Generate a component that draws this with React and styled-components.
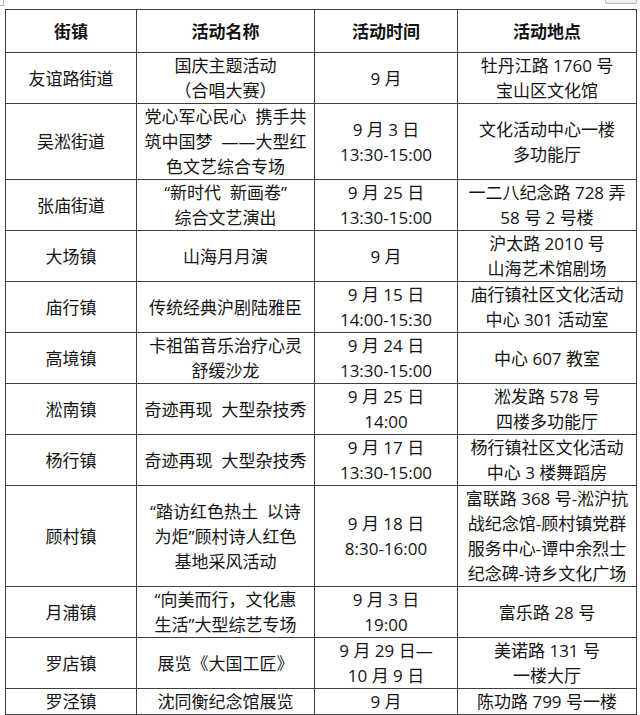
import React from "react";
import styled, { createGlobalStyle } from "styled-components";

const rows = [
  {
    h: 51,
    cells: [["友谊路街道"], ["国庆主题活动", "（合唱大赛）"], ["9 月"], ["牡丹江路 1760 号", "宝山区文化馆"]],
  },
  {
    h: 76,
    cells: [
      ["吴淞街道"],
      ["党心军心民心  携手共", "筑中国梦  ——大型红", "色文艺综合专场"],
      ["9 月 3 日", "13:30-15:00"],
      ["文化活动中心一楼", "多功能厅"],
    ],
  },
  {
    h: 50,
    cells: [
      ["张庙街道"],
      ["“新时代  新画卷”", "综合文艺演出"],
      ["9 月 25 日", "13:30-15:00"],
      ["一二八纪念路 728 弄", "58 号 2 号楼"],
    ],
  },
  {
    h: 51,
    cells: [["大场镇"], ["山海月月演"], ["9 月"], ["沪太路 2010 号", "山海艺术馆剧场"]],
  },
  {
    h: 50,
    cells: [
      ["庙行镇"],
      ["传统经典沪剧陆雅臣"],
      ["9 月 15 日", "14:00-15:30"],
      ["庙行镇社区文化活动", "中心 301 活动室"],
    ],
  },
  {
    h: 51,
    cells: [["高境镇"], ["卡祖笛音乐治疗心灵", "舒缓沙龙"], ["9 月 24 日", "13:30-15:00"], ["中心 607 教室"]],
  },
  {
    h: 51,
    cells: [["淞南镇"], ["奇迹再现  大型杂技秀"], ["9 月 25 日", "14:00"], ["淞发路 578 号", "四楼多功能厅"]],
  },
  {
    h: 51,
    cells: [
      ["杨行镇"],
      ["奇迹再现  大型杂技秀"],
      ["9 月 17 日", "13:30-15:00"],
      ["杨行镇社区文化活动", "中心 3 楼舞蹈房"],
    ],
  },
  {
    h: 100,
    cells: [
      ["顾村镇"],
      ["“踏访红色热土  以诗", "为炬”顾村诗人红色", "基地采风活动"],
      ["9 月 18 日", "8:30-16:00"],
      ["富联路 368 号-淞沪抗", "战纪念馆-顾村镇党群", "服务中心-谭中余烈士", "纪念碑-诗乡文化广场"],
    ],
  },
  {
    h: 51,
    cells: [["月浦镇"], ["“向美而行，文化惠", "生活”大型综艺专场"], ["9 月 3 日", "19:00"], ["富乐路 28 号"]],
  },
  {
    h: 50,
    cells: [["罗店镇"], ["展览《大国工匠》"], ["9 月 29 日—", "10 月 9 日"], ["美诺路 131 号", "一楼大厅"]],
  },
  {
    h: 26,
    cells: [["罗泾镇"], ["沈同衡纪念馆展览"], ["9 月"], ["陈功路 799 号一楼"]],
  },
];

const headers = ["街镇", "活动名称", "活动时间", "活动地点"];
const widths = [131, 178, 143, 179];

export default function App() {
  return (
    <>
      <GlobalStyle />
      <Page>
        <CornerMark />
        <TopTab />
        <Table>
          <colgroup>
            {widths.map((w, i) => (
              <col key={i} style={{ width: w }} />
            ))}
          </colgroup>
          <thead>
            <tr>
              {headers.map((t) => (
                <HeadCell key={t}>{t}</HeadCell>
              ))}
            </tr>
          </thead>
          <tbody>
            {rows.map((row, i) => (
              <tr key={i}>
                {row.cells.map((lines, j) => (
                  <Cell key={j} $h={row.h}>
                    {lines.map((l, k) => (
                      <Line key={k}>{l}</Line>
                    ))}
                  </Cell>
                ))}
              </tr>
            ))}
          </tbody>
        </Table>
      </Page>
    </>
  );
}

const GlobalStyle = createGlobalStyle`
  html, body {
    margin: 0;
    padding: 0;
    background: #fff;
  }
  body {
    font-family: "Open Sans", "Noto Sans CJK SC", sans-serif;
    color: #141414;
  }
`;

const Page = styled.div`
  position: relative;
  width: 640px;
  height: 715px;
  padding: 9px 0 0 5px;
  box-sizing: border-box;
  overflow: hidden;
`;

const CornerMark = styled.div`
  position: absolute;
  left: 0;
  top: 0;
  width: 3px;
  height: 5px;
  border-right: 1px solid #b5b5b5;
  border-bottom: 1px solid #b5b5b5;
`;

const TopTab = styled.div`
  position: absolute;
  left: 605px;
  top: -4px;
  width: 30px;
  height: 6px;
  background: #f0f0f0;
  border: 1px solid #b8b8b8;
  border-radius: 2px;
`;

const Table = styled.table`
  border-collapse: collapse;
  table-layout: fixed;
  width: 632px;
  font-size: 17px;
  line-height: 25px;
`;

const HeadCell = styled.th`
  height: 42px;
  padding: 0;
  border: 1px solid #3f3f3f;
  font-weight: 700;
  color: #111;
  text-align: center;
  vertical-align: middle;
`;

const Cell = styled.td`
  height: ${(p) => p.$h - 1}px;
  padding: 0;
  border: 1px solid #3f3f3f;
  text-align: center;
  vertical-align: middle;
`;

const Line = styled.div`
  white-space: pre;
`;
